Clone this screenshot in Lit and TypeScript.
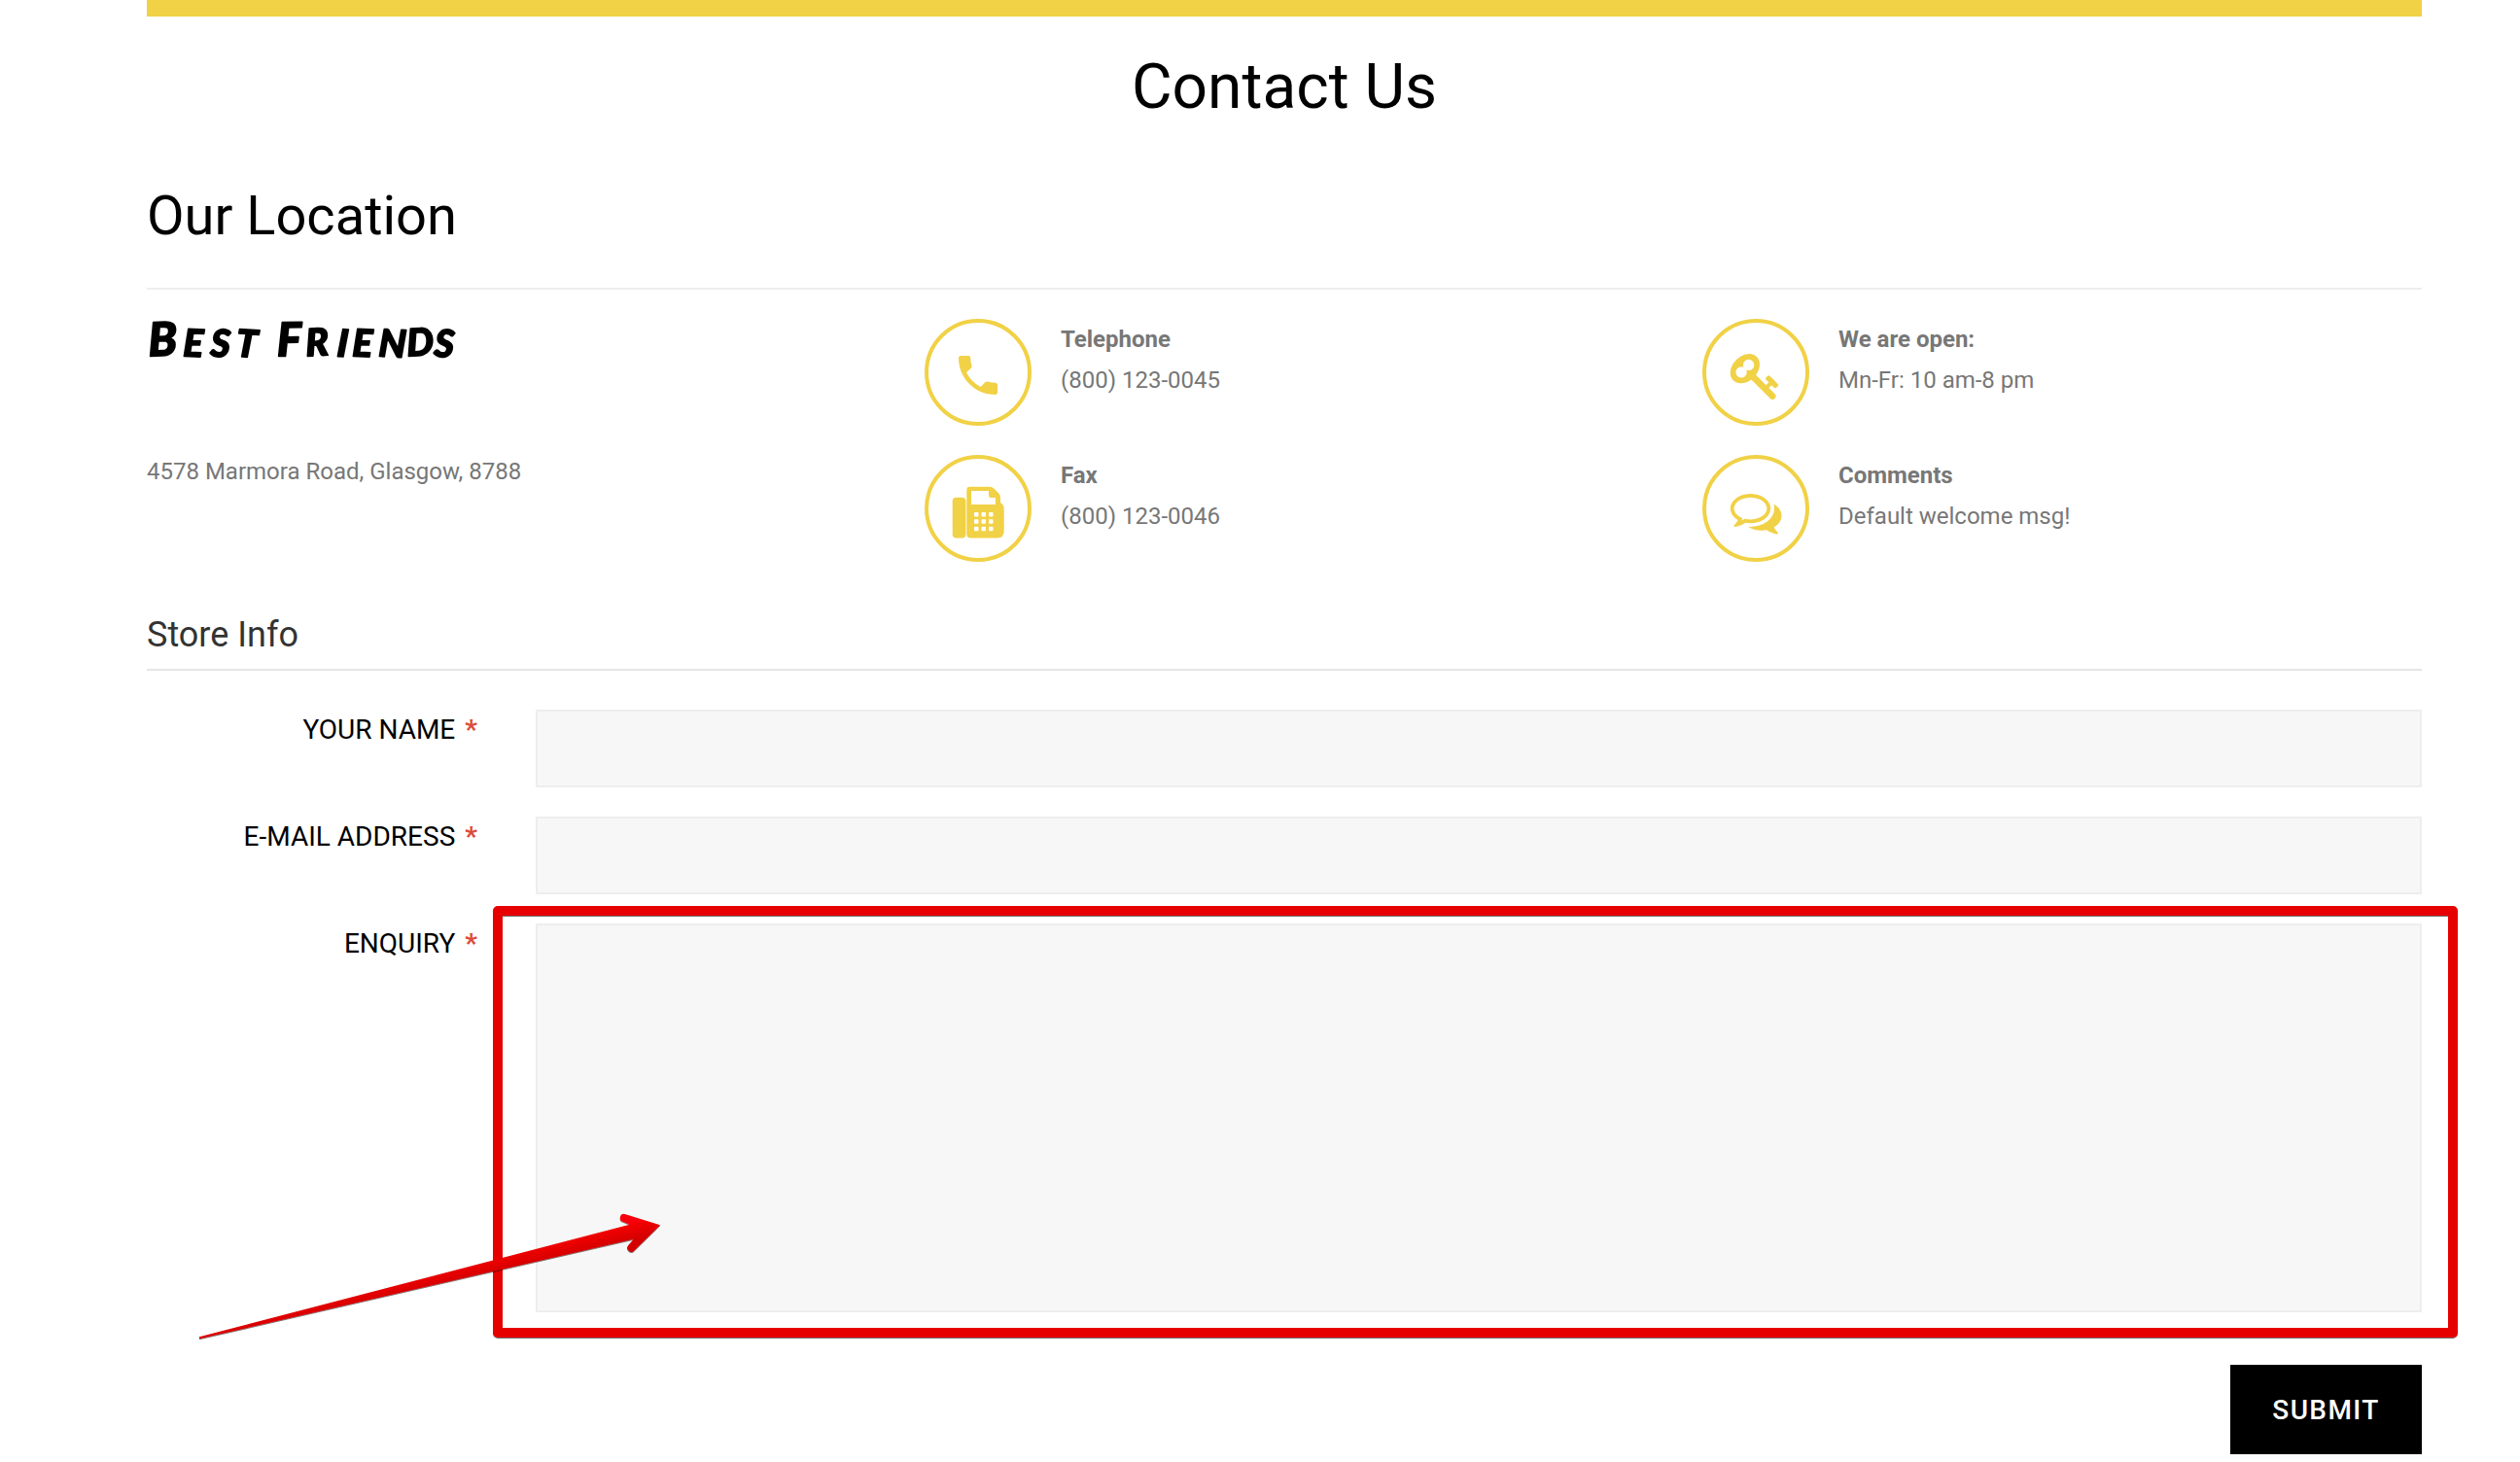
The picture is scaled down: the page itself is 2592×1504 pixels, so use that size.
import { LitElement, html, css, svg } from "lit";
import { customElement, property } from "lit/decorators.js";

const ICONS = {
  phone: svg`<path transform="translate(28.33 31.33) scale(2.222)" d="M6.62 10.79c1.44 2.83 3.76 5.14 6.59 6.59l2.2-2.2c.27-.27.67-.36 1.02-.24 1.12.37 2.33.57 3.57.57.55 0 1 .45 1 1V20c0 .55-.45 1-1 1-9.39 0-17-7.61-17-17 0-.55.45-1 1-1h3.5c.55 0 1 .45 1 1 0 1.25.2 2.45.57 3.57.11.35.03.74-.25 1.02l-2.2 2.2z"/>`,
  fax: svg`<rect x="28.7" y="43.7" width="13.7" height="41.8" rx="4"/>
    <path fill-rule="evenodd" d="M46.3 32.7H66.8Q69.6 32.7 71.6 34.7L75.8 38.9Q78 41 78 44V49Q81.7 51.2 81.7 55.4V78.2Q81.7 85.5 74.8 85.5H47.6Q43.3 85.5 43.3 81.4V35.7Q43.3 32.7 46.3 32.7ZM48 37V51H73V44H68.5Q66 44 66 41.5V37ZM51.7 59Q51 59 51 59.7V62.8Q51 63.5 51.7 63.5H54.8Q55.5 63.5 55.5 62.8V59.7Q55.5 59 54.8 59ZM59.2 59Q58.5 59 58.5 59.7V62.8Q58.5 63.5 59.2 63.5H62.3Q63 63.5 63 62.8V59.7Q63 59 62.3 59ZM66.7 59Q66 59 66 59.7V62.8Q66 63.5 66.7 63.5H69.8Q70.5 63.5 70.5 62.8V59.7Q70.5 59 69.8 59ZM51.7 66.3Q51 66.3 51 67V70.1Q51 70.8 51.7 70.8H54.8Q55.5 70.8 55.5 70.1V67Q55.5 66.3 54.8 66.3ZM59.2 66.3Q58.5 66.3 58.5 67V70.1Q58.5 70.8 59.2 70.8H62.3Q63 70.8 63 70.1V67Q63 66.3 62.3 66.3ZM66.7 66.3Q66 66.3 66 67V70.1Q66 70.8 66.7 70.8H69.8Q70.5 70.8 70.5 70.1V67Q70.5 66.3 69.8 66.3ZM51.7 73.7Q51 73.7 51 74.4V77.5Q51 78.2 51.7 78.2H54.8Q55.5 78.2 55.5 77.5V74.4Q55.5 73.7 54.8 73.7ZM59.2 73.7Q58.5 73.7 58.5 74.4V77.5Q58.5 78.2 59.2 78.2H62.3Q63 78.2 63 77.5V74.4Q63 73.7 62.3 73.7ZM66.7 73.7Q66 73.7 66 74.4V77.5Q66 78.2 66.7 78.2H69.8Q70.5 78.2 70.5 77.5V74.4Q70.5 73.7 69.8 73.7Z"/>`,
  key: svg`<path transform="translate(28.7 32.3) scale(.0295)" d="M832 512q0-80-56-136t-136-56-136 56-56 136q0 42 19 83-41-19-83-19-80 0-136 56t-56 136 56 136 136 56 136-56 56-136q0-42-19-83 41 19 83 19 80 0 136-56t56-136zm851 704q0 17-49 66t-66 49q-9 0-28.5-16t-36.5-33-38.5-40-24.5-26l-96 96 220 220q28 28 28 68 0 42-39 81t-81 39q-40 0-68-28l-671-671q-176 131-365 131-163 0-265.5-102.5t-102.5-265.5q0-160 95-313t248-248 313-95q163 0 265.5 102.5t102.5 265.5q0 189-131 365l355 355 96-96q-3-3-26-24.5t-40-38.5-33-36.5-16-28.5q0-17 49-66t66-49q13 0 23 10 6 6 46 44.5t82 79.5 86.5 86 73 78 28.5 41z"/>`,
  comments: svg`<path transform="translate(28.7 32.4) scale(.0295)" d="M704 384q-153 0-286 52t-211.5 141-78.5 191q0 82 53 158t149 132l97 56-35 84q34-20 62-39l44-31 53 10q78 14 153 14 153 0 286-52t211.5-141 78.5-191-78.5-191-211.5-141-286-52zm0-128q191 0 353.5 68.5t256.5 186.5 94 257-94 257-256.5 186.5-353.5 68.5q-86 0-176-16-124 88-278 128-36 9-86 16h-3q-11 0-20.5-8t-11.5-21q-1-3-1-6.5t.5-6.5 2-6l2.5-5 3.5-5.5 4-5 4.5-5 4-4.5q5-6 23-25t26-29.5 22.5-29 25-38.5 20.5-44q-124-72-195-177t-71-224q0-139 94-257t256.5-186.5 353.5-68.5zm822 1169q10 24 20.5 44t25 38.5 22.5 29 26 29.5 23 25q1 1 4 4.5t4.5 5 4 5 3.5 5.5l2.5 5 2 6 .5 6.5-1 6.5q-3 14-13 22t-22 7q-50-7-86-16-154-40-278-128-90 16-176 16-271 0-472-132 58 4 88 4 161 0 309-45t264-129q125-92 192-212t67-254q0-77-23-152 129 71 204 178t75 230q0 120-71 224.5t-195 176.5z"/>`,
};

@customElement("contact-item")
class ContactItem extends LitElement {
  @property() icon: keyof typeof ICONS = "phone";
  @property() heading = "";
  @property() value = "";

  static styles = css`
    :host { display: flex; gap: 30px; height: 110px; }
    .badge { box-sizing: border-box; width: 110px; height: 110px; border: 4px solid #f1d146; border-radius: 50%; }
    .glyph { display: block; width: 110px; height: 110px; margin: -4px; fill: #f1d146; }
    .text { font-size: 24px; line-height: 42px; color: #777; }
    .heading { font-weight: 700; }
  `;

  render() {
    return html`
      <div class="badge"><svg class="glyph" viewBox="0 0 110 110">${ICONS[this.icon]}</svg></div>
      <div class="text">
        <div class="heading">${this.heading}</div>
        <div>${this.value}</div>
      </div>`;
  }
}

@customElement("app-root")
class AppRoot extends LitElement {
  static styles = css`
    :host {
      display: block; position: relative; box-sizing: border-box; height: 1504px; overflow: hidden;
      padding: 0 101px 0 151px; background: #fff; color: #000;
      font-family: Roboto, "Liberation Sans", sans-serif;
    }
    .bar { height: 17px; background: #f1d146; }
    h1, h2, h3 { margin: 0; font-weight: 400; }
    h1 { padding-top: 35px; font-size: 64px; line-height: 75px; text-align: center; }
    h2 { padding: 62px 0 41px; font-size: 56px; line-height: 66px; border-bottom: 2px solid #eee; }
    .info { display: grid; grid-template-columns: repeat(3, 1fr); gap: 60px; padding-top: 30px; height: 250px; }
    .column { display: flex; flex-direction: column; gap: 30px; }
    .brand { display: block; width: 330px; height: 106px; overflow: visible; filter: blur(.6px); }
    .wordmark {
      font-family: Lato, sans-serif; font-size: 39px; font-weight: 900; font-style: italic;
      stroke: #000; stroke-width: 1.6px; stroke-linejoin: round;
    }
    .initial { font-size: 48px; }
    .address { font-size: 24px; line-height: 42px; color: #777; }
    h3 { padding: 55px 0 15px; font-size: 36px; line-height: 40px; color: #333; border-bottom: 2px solid #e5e5e5; }
    form { display: flex; flex-direction: column; gap: 30px; padding-top: 40px; }
    .row { display: grid; grid-template-columns: 340px 1fr; column-gap: 60px; }
    label { padding-top: 1px; font-size: 28px; line-height: 39px; text-align: right; text-transform: uppercase; }
    .required { margin-left: 10px; color: #dd4b39; font-weight: 700; }
    input, textarea {
      display: block; box-sizing: border-box; width: 100%; height: 80px; margin: 0; padding: 10px 20px;
      border: 2px solid #eee; border-radius: 0; background: #f7f7f7; outline: 0; resize: none;
    }
    textarea { height: 400px; }
    button {
      align-self: flex-end; width: 197px; height: 92px; margin-top: 24px; padding: 0; border: 0;
      background: #000; color: #fff; font: 500 28px/39px Roboto, sans-serif; letter-spacing: 1.4px;
    }
    .annotation { position: absolute; left: 0; top: 0; width: 2592px; height: 1504px; pointer-events: none; }
  `;

  field(id: string, text: string, control: unknown) {
    return html`<div class="row"><label for=${id}>${text}<span class="required">*</span></label>${control}</div>`;
  }

  render() {
    return html`
      <div class="bar"></div>
      <h1>Contact Us</h1>
      <h2>Our Location</h2>
      <div class="info">
        <div class="column">
          <svg class="brand" viewBox="0 0 330 106">
            <text class="wordmark" y="38.5" x="2 37 65 91 119 134 164 195 211 238 268 295" rotate="-2 2 3 4 0 -1 -3 4 2 3 -3 4"><tspan class="initial">B</tspan>EST <tspan class="initial">F</tspan>RIENDS</text>
          </svg>
          <div class="address">4578 Marmora Road, Glasgow, 8788</div>
        </div>
        <div class="column">
          <contact-item icon="phone" heading="Telephone" value="(800) 123-0045"></contact-item>
          <contact-item icon="fax" heading="Fax" value="(800) 123-0046"></contact-item>
        </div>
        <div class="column">
          <contact-item icon="key" heading="We are open:" value="Mn-Fr: 10 am-8 pm"></contact-item>
          <contact-item icon="comments" heading="Comments" value="Default welcome msg!"></contact-item>
        </div>
      </div>
      <h3>Store Info</h3>
      <form>
        ${this.field("name", "Your Name", html`<input id="name" />`)}
        ${this.field("email", "E-Mail Address", html`<input id="email" />`)}
        ${this.field("enquiry", "Enquiry", html`<textarea id="enquiry"></textarea>`)}
        <button type="button">SUBMIT</button>
      </form>
      <svg class="annotation" viewBox="0 0 2592 1504">
        <defs>
          <linearGradient id="shaft" gradientUnits="userSpaceOnUse" x1="560" y1="1279" x2="564" y2="1296">
            <stop offset="0" stop-color="#f60507" /><stop offset="1" stop-color="#d40000" />
          </linearGradient>
          <filter id="edge" x="-5%" y="-5%" width="110%" height="110%">
            <feDropShadow dx="0" dy="1" stdDeviation="0.2" flood-color="#000" flood-opacity=".55" />
          </filter>
        </defs>
        <rect x="512" y="937" width="2011" height="434" fill="none" stroke="#e60202" stroke-width="10" stroke-linejoin="round" filter="url(#edge)" />
        <path filter="url(#edge)" fill="url(#shaft)" d="M205 1375.3L647.7 1259.7L640.8 1256.8A4 4 0 0 1 642.8 1249L679 1260.3L652.4 1286.4A4 4 0 0 1 646.3 1281L651.7 1274.8L205 1377.3Z" />
      </svg>`;
  }
}
